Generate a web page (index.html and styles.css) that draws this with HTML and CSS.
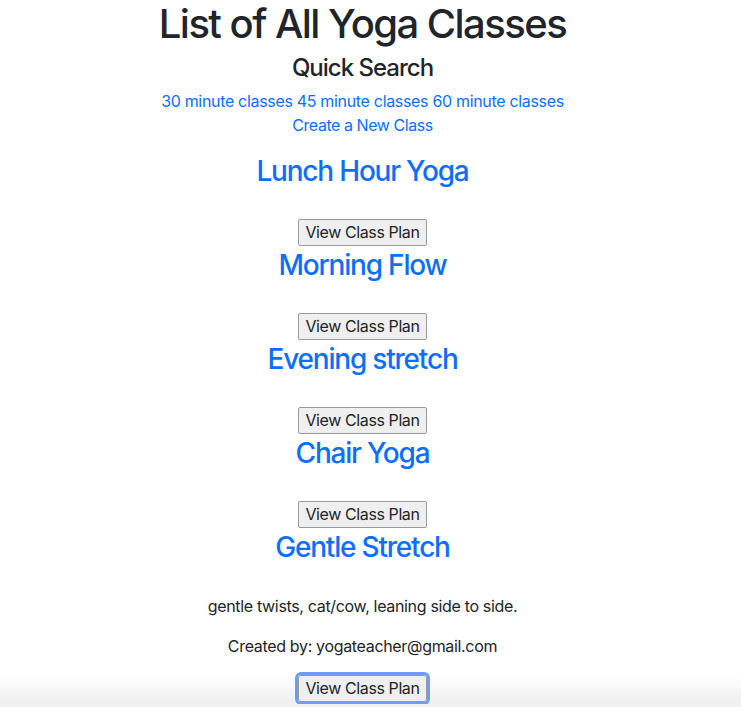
FILE: index.html
```html
<!DOCTYPE html>
<html lang="en">
<head>
<meta charset="utf-8">
<title>Yoga Classes</title>
<link rel="stylesheet" href="styles.css">
</head>
<body>
<main class="page">
  <h1 class="title">List of All Yoga Classes</h1>
  <h4 class="subtitle">Quick Search</h4>
  <div class="search-links">
    <a href="#">30 minute classes</a> <a href="#">45 minute classes</a> <a href="#">60 minute classes</a>
  </div>
  <a class="create-link" href="#">Create a New Class</a>

  <section class="klass">
    <h3 class="klass-name">Lunch Hour Yoga</h3>
    <button class="btn">View Class Plan</button>
  </section>
  <section class="klass">
    <h3 class="klass-name">Morning Flow</h3>
    <button class="btn">View Class Plan</button>
  </section>
  <section class="klass">
    <h3 class="klass-name">Evening stretch</h3>
    <button class="btn">View Class Plan</button>
  </section>
  <section class="klass">
    <h3 class="klass-name">Chair Yoga</h3>
    <button class="btn">View Class Plan</button>
  </section>
  <section class="klass">
    <h3 class="klass-name">Gentle Stretch</h3>
    <p class="desc">gentle twists, cat/cow, leaning side to side.</p>
    <p class="author">Created by: yogateacher@gmail.com</p>
    <button class="btn btn-focus">View Class Plan</button>
  </section>
</main>
</body>
</html>
```
FILE: styles.css
```css
html {
  min-height: 100%;
  background: linear-gradient(to bottom, #ffffff 0, #ffffff 674px, #f7f7f7 690px, #f1f1f1 699px, #f1f1f1 100%);
}
body {
  margin: 0;
  font-family: Inter, "Noto Sans", sans-serif;
  font-size: 16px;
  line-height: 24px;
  letter-spacing: -0.33px;
  color: #212529;
}
.page {
  width: 725px;
  display: flex;
  flex-direction: column;
  align-items: center;
  text-align: center;
}
.title {
  margin: 0 0 6px;
  font-size: 40px;
  line-height: 48px;
  font-weight: 500;
  letter-spacing: -1.55px;
}
.subtitle {
  margin: 0 0 7px;
  font-size: 24px;
  line-height: 28px;
  font-weight: 500;
  letter-spacing: -1px;
}
a {
  color: #0d6efd;
  text-decoration: none;
}
.search-links {
  display: block;
  line-height: 24px;
  letter-spacing: -0.32px;
}
.create-link {
  display: block;
  line-height: 24px;
  letter-spacing: -0.45px;
}
.klass {
  display: flex;
  flex-direction: column;
  align-items: center;
  padding-bottom: 2px;
}
.klass:first-of-type { margin-top: 17px; }
.klass-name {
  margin: 0 0 31px;
  font-size: 28px;
  line-height: 34px;
  font-weight: 500;
  letter-spacing: -1.2px;
  color: #0d6efd;
}
.desc { margin: -1px 0 16px; }
.author { margin: 0 0 17px; }
.btn {
  font-family: inherit;
  font-size: 16px;
  line-height: 23px;
  letter-spacing: -0.4px;
  color: #212529;
  background: #efefef;
  border: 1px solid #9a9a9a;
  border-radius: 2px;
  padding: 1px 6px;
  margin: 0;
}
.btn-focus {
  outline: 3px solid #6a9ff5;
  outline-offset: 0;
  border-radius: 3px;
}
```
